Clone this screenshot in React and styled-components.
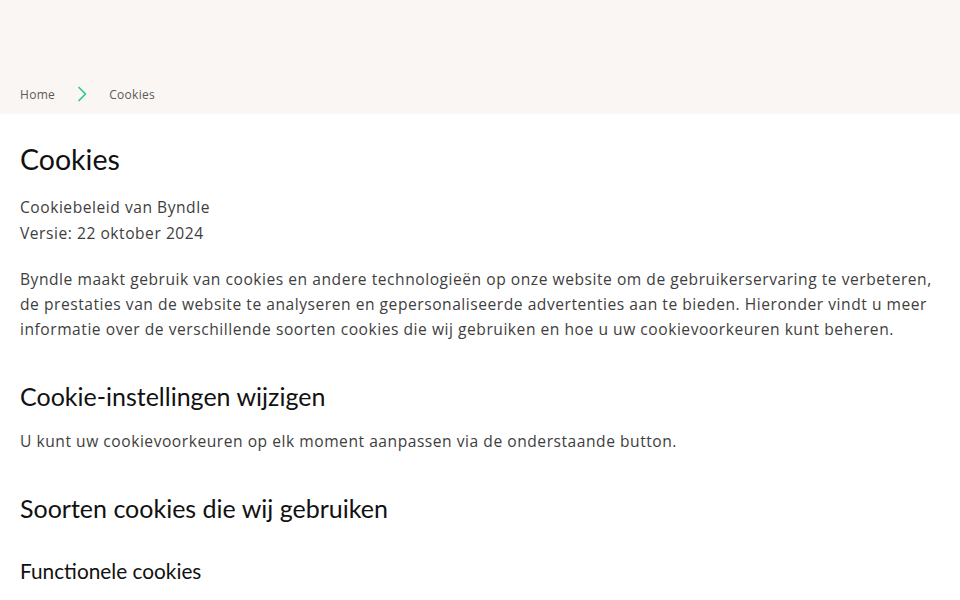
import React from 'react';
import styled, { createGlobalStyle } from 'styled-components';

const GlobalStyle = createGlobalStyle`
    body {
        margin: 0;
        background: #ffffff;
        font-family: "Open Sans", "Noto Sans", sans-serif;
    }
`;

const TopBarSC = styled.div`
    height: 114px;
    background: #f9f6f3;
    display: flex;
    align-items: flex-end;
    padding: 0 20px;
    box-sizing: border-box;
`;

const BreadcrumbSC = styled.nav`
    display: flex;
    align-items: center;
    gap: 22px;
    height: 40px;
    font-size: 12px;
    color: #5a5a5a;
    letter-spacing: 0.3px;
`;

const CrumbSC = styled.a`
    color: inherit;
    text-decoration: none;
`;

const ContentSC = styled.main`
    padding: 27px 20px 40px;
`;

const H1_SC = styled.h1`
    margin: 0 0 17px;
    font-family: "Lato", sans-serif;
    font-weight: 400;
    font-size: 28.5px;
    line-height: 36px;
    color: #111;
`;

const H2_SC = styled.h2`
    margin: ${p => p.$top || 38}px 0 17px;
    font-family: "Lato", sans-serif;
    font-weight: 400;
    font-size: 25px;
    line-height: 32px;
    color: #111;
`;

const H3_SC = styled.h3`
    margin: 33px 0 0;
    font-family: "Lato", sans-serif;
    font-weight: 400;
    font-size: 20.8px;
    line-height: 28px;
    color: #111;
`;

const TextSC = styled.p`
    margin: 0 0 ${p => p.$bottom ?? 21}px;
    font-size: 15.6px;
    line-height: ${p => p.$lh || 25}px;
    color: #3e3e3e;
    letter-spacing: 0.53px;
`;

const Chevron = () => (
    <svg width="10" height="16" viewBox="0 0 10 16" fill="none">
        <path d="M2 1.5 L8.5 8 L2 14.5" stroke="#2fc98a" strokeWidth="1.7" strokeLinecap="round" strokeLinejoin="round" />
    </svg>
);

const App = () => {
    return (
        <>
            <GlobalStyle />
            <TopBarSC>
                <BreadcrumbSC>
                    <CrumbSC href="#">Home</CrumbSC>
                    <Chevron />
                    <CrumbSC href="#">Cookies</CrumbSC>
                </BreadcrumbSC>
            </TopBarSC>

            <ContentSC>
                <H1_SC>Cookies</H1_SC>
                <TextSC $lh={26}>
                    Cookiebeleid van Byndle<br />
                    Versie: 22 oktober 2024
                </TextSC>
                <TextSC $bottom={0}>
                    Byndle maakt gebruik van cookies en andere technologieën op onze website om de gebruikerservaring te verbeteren,
                    de prestaties van de website te analyseren en gepersonaliseerde advertenties aan te bieden. Hieronder vindt u meer
                    informatie over de verschillende soorten cookies die wij gebruiken en hoe u uw cookievoorkeuren kunt beheren.
                </TextSC>

                <H2_SC>Cookie-instellingen wijzigen</H2_SC>
                <TextSC $bottom={0}>U kunt uw cookievoorkeuren op elk moment aanpassen via de onderstaande button.</TextSC>

                <H2_SC>Soorten cookies die wij gebruiken</H2_SC>
                <H3_SC>Functionele cookies</H3_SC>
            </ContentSC>
        </>
    );
};

export default App;
